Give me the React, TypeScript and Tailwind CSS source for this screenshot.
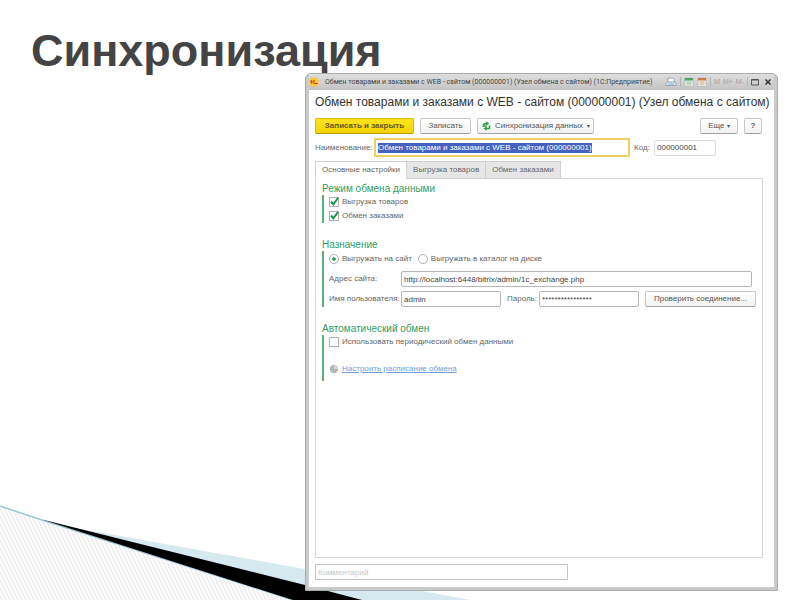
import type { ReactNode } from 'react'
import { useState } from 'react'

const TABS = ['Основные настройки', 'Выгрузка товаров', 'Обмен заказами']

const buttonStyle =
  'h-4 rounded-xs border border-[#c8c8c8] border-b-[#a3a3a3] bg-linear-to-b from-white to-[#f1f1f1] text-center whitespace-nowrap text-[#555]'
const fieldStyle = 'h-4 min-w-0 rounded-xs border border-[#b5b5b5] bg-white px-0.5 text-[#444] outline-none'

const SlideBackground = () => (
  <svg
    className="absolute bottom-0 left-0 h-[100px] w-full"
    viewBox="0 0 800 100"
    preserveAspectRatio="none"
    aria-hidden="true"
  >
    <defs>
      <pattern id="hatch" width="4" height="8" patternUnits="userSpaceOnUse">
        <rect width="4" height="8" fill="#fcfcfc" />
        <path d="M-6 -4L2 12M-4 -8L4 8M-2 -12L6 4M0 -8L8 8M-4 0L0 8" stroke="#e6e6e6" strokeWidth="1" />
      </pattern>
    </defs>
    <path d="M0 6L45 21L293 100H0Z" fill="url(#hatch)" />
    <path d="M70 27L305 69L470 100H340Z" fill="#d6e8f0" />
    <path d="M0 6L45 21L293 100" fill="none" stroke="#9cc8da" strokeWidth="1.500" />
    <path d="M42 19.500L305 85L362 100H293Z" fill="#000" />
  </svg>
)

const Logo = () => (
  <svg className="h-2.5 w-2.5" viewBox="0 0 10 10" aria-hidden="true">
    <circle cx="5" cy="5" r="4.800" fill="#fbc93c" />
    <path d="M1.300 4.200L2.400 3.400V6.800" fill="none" stroke="#d8341c" strokeWidth="1" />
    <path d="M6 4.200C5.500 3 3.700 3.600 3.700 5C3.700 6.200 4.500 6.500 5.300 6.500H8.800" fill="none" stroke="#d8341c" strokeWidth="1" />
    <circle cx="5.200" cy="5" r=".6" fill="#d8341c" />
  </svg>
)

const PrinterIcon = () => (
  <svg className="h-2.5 w-3" viewBox="0 0 12 10" fill="none" stroke="#9aa6b2" aria-hidden="true">
    <path d="M3 5V1H7.500L9 2.500V5" fill="#fff" />
    <path d="M1.500 5H10.500L11.300 8.500H.7Z" fill="#e4ebf1" />
    <path d="M3 7H9" stroke="#7fa9c8" />
  </svg>
)

const CalendarIcon = ({ color }: { color: string }) => (
  <svg className="h-2.5 w-2.5" viewBox="0 0 10 10" aria-hidden="true">
    <rect x="1" y="1" width="8" height="8.500" fill="#f7f7f2" stroke="#aaa" strokeWidth=".6" />
    <rect x="1" y="1" width="8" height="2.500" fill={color} />
    <path d="M2 5H8M2 7H8M4 4V9M6 4V9" stroke={color} strokeWidth=".6" opacity=".7" />
  </svg>
)

const SyncIcon = () => (
  <svg className="h-2.5 w-2.5" viewBox="0 0 10 10" fill="none" stroke="#2f9e45" strokeWidth="1.500" aria-hidden="true">
    <path d="M1.500 5H5.500M2.300 5C2.300 3 3.500 2.500 5.500 2.500" />
    <path d="M5 .3L8.300 2.500L5 4.700Z" fill="#2f9e45" stroke="none" />
    <path d="M8.500 4.500V7.500H5" />
    <path d="M5.800 5.300L2.500 7.500L5.800 9.700Z" fill="#2f9e45" stroke="none" />
  </svg>
)

const Check = ({ label, checked = false }: { label: string; checked?: boolean }) => (
  <label className="flex h-3.5 items-center gap-[3px]">
    <span className="relative flex h-2.5 w-2.5">
      <input
        type="checkbox"
        defaultChecked={checked}
        className="peer h-2.5 w-2.5 appearance-none border border-[#b0b0b0] bg-white"
      />
      <svg
        className="pointer-events-none absolute inset-0 hidden h-2.5 w-2.5 overflow-visible peer-checked:block"
        viewBox="0 0 10 10"
        fill="none"
        stroke="#16954c"
        strokeWidth="2"
        aria-hidden="true"
      >
        <path d="M2 4.500L4.300 7.300L9 1" />
      </svg>
    </span>
    {label}
  </label>
)

const Radio = ({ label, checked = false }: { label: string; checked?: boolean }) => (
  <label className="flex items-center gap-[3px]">
    <input
      type="radio"
      name="target"
      defaultChecked={checked}
      className="h-2.5 w-2.5 appearance-none rounded-full border border-[#b0b0b0] bg-white checked:bg-radial checked:from-[#16954c] checked:from-25% checked:to-white checked:to-35%"
    />
    {label}
  </label>
)

const Section = ({ title, children }: { title: string; children: ReactNode }) => (
  <section>
    <h2 className="text-[10px] leading-3 text-[#2f9e62]">{title}</h2>
    <div className="border-l-2 border-[#5cae80] pl-[5px]">{children}</div>
  </section>
)

const TitleBar = () => (
  <header className="flex h-4 items-center bg-linear-to-b from-[#dedede] to-[#c4c4c4] pr-0.5 text-[7px]">
    <Logo />
    <span className="ml-1.5 font-[Roboto,sans-serif] whitespace-nowrap text-[#444]">
      Обмен товарами и заказами с WEB - сайтом (000000001) (Узел обмена с сайтом) (1С:Предприятие)
    </span>
    <div className="ml-auto flex items-center gap-[3px] text-[#a9a09b]">
      <PrinterIcon />
      <span className="h-2.5 w-px bg-[#b5b5b5]" />
      <CalendarIcon color="#48a85c" />
      <CalendarIcon color="#cf7a45" />
      <span className="h-2.5 w-px bg-[#b5b5b5]" />
      <span>M</span>
      <span>M+</span>
      <span>M-</span>
      <span className="h-2.5 w-px bg-[#b5b5b5]" />
      <svg className="h-2 w-2" viewBox="0 0 8 8" fill="none" stroke="#555" aria-hidden="true">
        <path d="M.5 1.500H7.500V7H.5ZM.5 2H7.500" />
      </svg>
      <svg className="ml-0.5 h-2 w-2" viewBox="0 0 8 8" stroke="#333" strokeWidth="1.500" aria-hidden="true">
        <path d="M1.500 1.500L6.500 6.500M6.500 1.500L1.500 6.500" />
      </svg>
    </div>
  </header>
)

export default function App() {
  const [tab, setTab] = useState(0)

  return (
    <div className="relative flex min-h-screen flex-col overflow-hidden bg-white font-['Liberation_Sans',Arial,sans-serif]">
      <SlideBackground />
      <h1 className="h-[73px] pt-6 pl-[31px] text-[45px] leading-[54px] font-bold text-[#444]">Синхронизация</h1>

      <main className="relative mr-[22px] mb-[9px] ml-[305px] flex flex-1 flex-col rounded-t-md border border-[#a9abab] bg-[#c9caca] px-[3px] pb-[3px] text-[8px] leading-3 text-[#666]">
        <TitleBar />
        <div className="flex flex-1 flex-col bg-white px-1.5 pt-[5px] pb-[7px]">
          <p className="h-[23px] text-[12px] leading-[14px] whitespace-nowrap text-[#333]">
            Обмен товарами и заказами с WEB - сайтом (000000001) (Узел обмена с сайтом)
          </p>

          <div className="flex gap-1.5 pr-1.5">
            <button className="h-4 w-[99px] rounded-xs border border-[#dcb800] border-b-[#b89a00] bg-linear-to-b from-[#ffe51f] to-[#f2d200] font-bold text-[#665a1c]">
              Записать и закрыть
            </button>
            <button className={`w-[51px] ${buttonStyle}`}>Записать</button>
            <button className={`flex w-[117px] items-center justify-center gap-1 ${buttonStyle}`}>
              <SyncIcon />
              Синхронизация данных
              <span className="text-[6px]">▾</span>
            </button>
            <button className={`ml-auto w-[38px] ${buttonStyle}`}>
              Еще <span className="text-[6px]">▾</span>
            </button>
            <button className={`w-[18px] font-bold ${buttonStyle}`}>?</button>
          </div>

          <div className="mt-1 flex items-center">
            <label htmlFor="name" className="w-[59px]">Наименование:</label>
            <div className="flex h-[19px] w-64 items-center border-2 border-[#edcf62] bg-white px-0.5">
              <input
                id="name"
                defaultValue="Обмен товарами и заказами с WEB - сайтом (000000001)"
                className="field-sizing-content h-2.5 bg-[#4562c0] text-white outline-none"
              />
            </div>
            <label htmlFor="code" className="ml-1 w-5">Код:</label>
            <input id="code" defaultValue="000000001" className="h-4 w-[62px] rounded-xs border border-[#ddd] px-0.5 text-[#444] outline-none" />
          </div>

          <div role="tablist" className="relative mt-1 -mb-px flex">
            {TABS.map((name, i) => (
              <button
                key={name}
                role="tab"
                aria-selected={i === tab}
                onClick={() => setTab(i)}
                className={`-mr-px h-[18px] border border-[#cfcfcf] px-1.5 ${
                  i === tab ? 'border-b-white bg-white' : 'bg-[#e6e6e6]'
                }`}
              >
                {name}
              </button>
            ))}
          </div>

          <div role="tabpanel" className="mr-[5px] flex flex-1 flex-col gap-4 border border-[#d6d6d6] px-1.5 pt-1">
            <Section title="Режим обмена данными">
              <Check label="Выгрузка товаров" checked />
              <Check label="Обмен заказами" checked />
            </Section>

            <Section title="Назначение">
              <div className="flex h-4 items-center gap-1.5">
                <Radio label="Выгружать на сайт" checked />
                <Radio label="Выгружать в каталог на диске" />
              </div>
              <div className="mt-1 flex items-center pr-1">
                <label htmlFor="address" className="w-[72px]">Адрес сайта:</label>
                <input id="address" defaultValue="http://localhost:6448/bitrix/admin/1c_exchange.php" className={`flex-1 ${fieldStyle}`} />
              </div>
              <div className="mt-1 flex items-center">
                <label htmlFor="user" className="w-[72px]">Имя пользователя:</label>
                <input id="user" defaultValue="admin" className={`flex-1 ${fieldStyle}`} />
                <label htmlFor="password" className="ml-1.5 w-8">Пароль:</label>
                <input id="password" defaultValue="****************" className={`flex-1 ${fieldStyle}`} />
                <button className={`ml-1.5 w-[111px] ${buttonStyle}`}>Проверить соединение...</button>
              </div>
            </Section>

            <Section title="Автоматический обмен">
              <Check label="Использовать периодический обмен данными" />
              <div className="flex h-8 items-center gap-[3px] pt-2">
                <svg className="h-2.5 w-2.5" viewBox="0 0 10 10" aria-hidden="true">
                  <circle cx="5" cy="5" r="4.200" fill="#b3b3bd" />
                  <path d="M5 5V1A4 4 0 0 1 9 5Z" fill="#d5d5dc" />
                </svg>
                <a href="#schedule" className="text-[#6f9fd8] underline">Настроить расписание обмена</a>
              </div>
            </Section>
          </div>

          <input
            aria-label="Комментарий"
            placeholder="Комментарий"
            className="mt-1.5 h-4 w-[253px] border border-[#c4c4c4] px-0.5 outline-none placeholder:text-[#c9c9c9]"
          />
        </div>
      </main>
    </div>
  )
}
